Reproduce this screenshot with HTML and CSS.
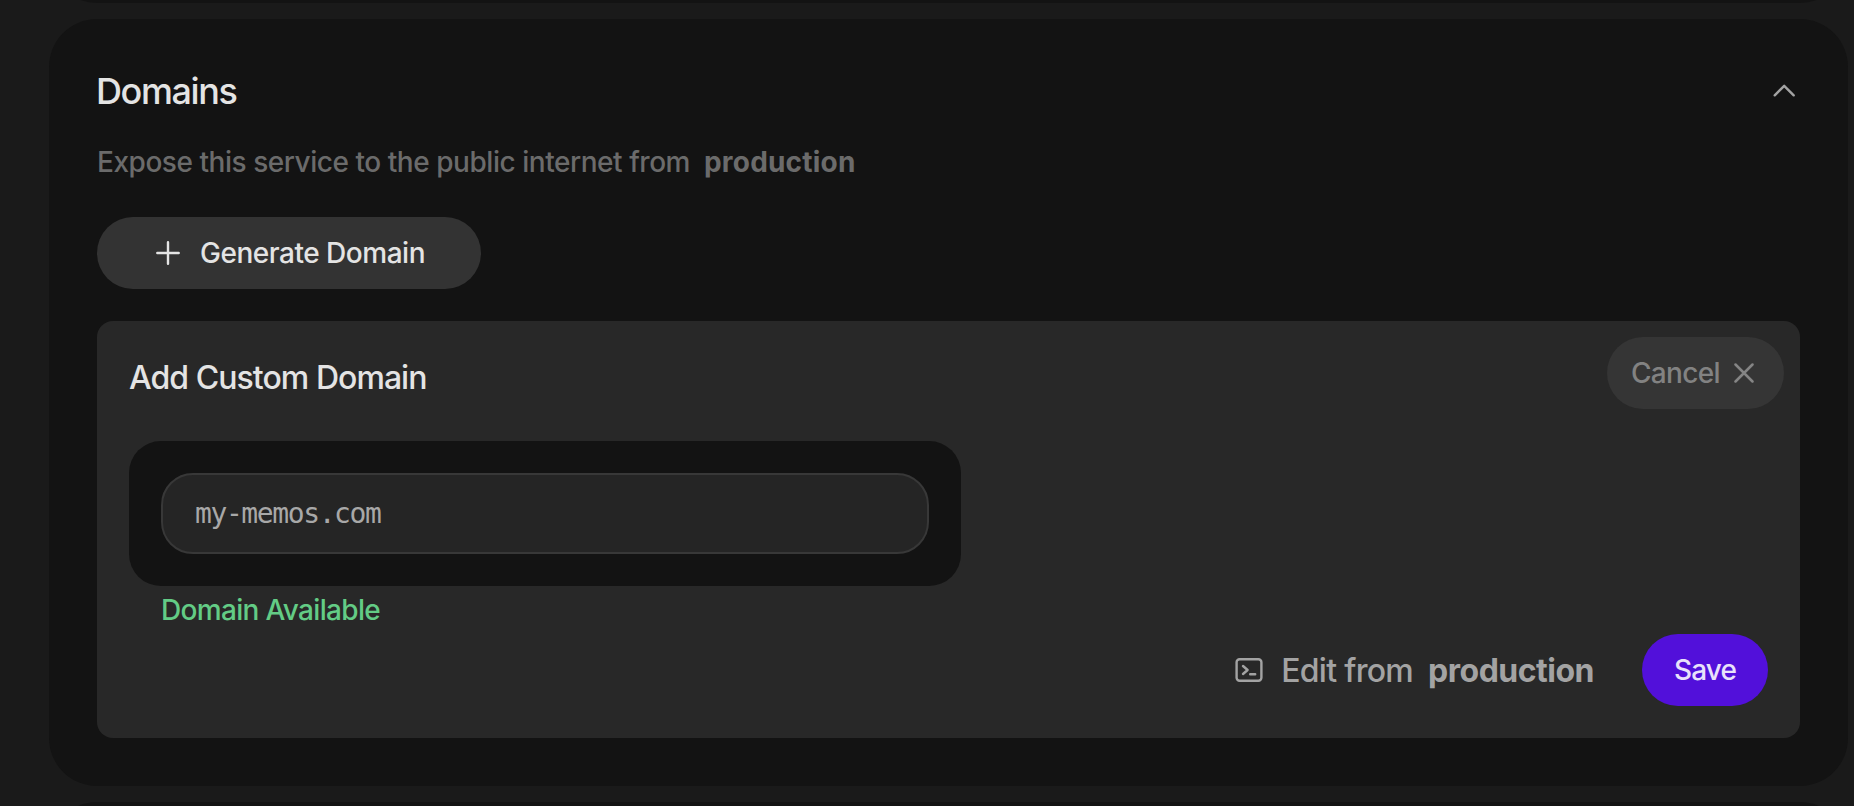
FILE: index.html
```html
<!DOCTYPE html>
<html lang="en">
<head>
<meta charset="utf-8">
<title>Domains</title>
<link rel="stylesheet" href="styles.css">
</head>
<body>
<main class="page">
  <section class="card card-prev"></section>
  <section class="card domains">
    <header class="card-head">
      <h2 class="card-title">Domains</h2>
      <svg class="chevron" width="24" height="14" viewBox="0 0 24 14"><path d="M2.7 11.3 L12.2 1.8 L21.7 11.3"/></svg>
    </header>
    <p class="lead"><span>Expose this service to the public internet from</span><b class="env">production</b></p>
    <button class="btn generate" type="button">
      <svg class="plus" width="24" height="24" viewBox="0 0 24 24"><path d="M12 1.3V22.7M1.3 12H22.7"/></svg>
      <span>Generate Domain</span>
    </button>
    <form class="panel">
      <div class="panel-head">
        <h3 class="panel-title">Add Custom Domain</h3>
        <button class="btn cancel" type="button">
          <span>Cancel</span>
          <svg class="cross" width="20" height="20" viewBox="0 0 20 20"><path d="M1.5 1.5L18.5 18.5M18.5 1.5L1.5 18.5"/></svg>
        </button>
      </div>
      <div class="field">
        <input class="input" type="text" value="my-memos.com" spellcheck="false" aria-label="Domain">
      </div>
      <p class="status">Domain Available</p>
      <footer class="panel-foot">
        <svg class="terminal" width="28" height="24" viewBox="0 0 28 24">
          <rect x="1.6" y="1.25" width="24.8" height="21.5" rx="3"/>
          <path d="M8 8L12.6 12L8 16M15.2 16.2H20.2"/>
        </svg>
        <span class="edit">Edit from</span>
        <b class="edit-env">production</b>
        <button class="btn save" type="button">Save</button>
      </footer>
    </form>
  </section>
  <section class="card card-next"></section>
</main>
</body>
</html>
```

FILE: styles.css
```css
* { box-sizing: border-box; }
body {
  margin: 0;
  background: #1a1a1a;
  color: #e4e4e4;
  font-family: Inter, "Liberation Sans", sans-serif;
  font-weight: 450;
  overflow: hidden;
}
h2, h3, p { margin: 0; font-weight: 450; }
svg { flex: none; fill: none; stroke-linecap: round; stroke-linejoin: round; }

.page {
  height: 806px;
  padding: 0 6px 0 49px;
  display: flex;
  flex-direction: column;
  gap: 16px;
  overflow: hidden;
}
.card { flex: none; background: #131313; border-radius: 48px; }
.card-prev, .card-next { height: 120px; }
.card-prev { margin-top: -117px; }

.domains { height: 767px; padding: 48px; }
.card-head {
  display: flex;
  justify-content: space-between;
  align-items: center;
  height: 48px;
  padding-right: 4px;
}
.card-title { font-size: 36px; line-height: 48px; letter-spacing: -1.4px; margin-left: -1px; }
.chevron { stroke: #a3a3a3; stroke-width: 2.4; }

.lead {
  display: flex;
  margin: 27px 0 35px 0;
  color: #6b6b6b;
  font-size: 28px;
  line-height: 40px;
  letter-spacing: -0.46px;
}
.env { margin-left: 14px; letter-spacing: 0.2px; }

.btn {
  display: flex;
  align-items: center;
  height: 72px;
  border: 0;
  border-radius: 36px;
  font: 450 28px/40px Inter, "Liberation Sans", sans-serif;
}
.generate {
  width: 384px;
  padding: 0 0 0 59px;
  gap: 20px;
  background: #333;
  color: #e4e4e4;
  letter-spacing: -0.48px;
}
.plus { stroke: #e4e4e4; stroke-width: 2.4; }

.panel {
  width: 1703px;
  height: 417px;
  margin-top: 32px;
  padding: 0 32px 32px;
  border-radius: 16px;
  background: #282828;
}
.panel-head {
  display: flex;
  justify-content: space-between;
  height: 120px;
  margin-right: -16px;
}
.panel-title { margin-top: 37px; font-size: 32px; line-height: 40px; letter-spacing: -0.95px; }
.cancel {
  width: 177px;
  margin-top: 16px;
  padding: 0 0 0 24px;
  gap: 14px;
  background: #353535;
  color: #828282;
  letter-spacing: -0.7px;
}
.cross { stroke: #858585; stroke-width: 2.5; }

.field { width: 832px; height: 145px; padding: 32px; border-radius: 32px; background: #131313; }
.input {
  display: block;
  width: 100%;
  height: 81px;
  padding: 0 32px;
  border: 2px solid #383838;
  border-radius: 32px;
  outline: 0;
  background: #252525;
  color: #a8a8a8;
  font: 28px "DejaVu Sans Mono", monospace;
  letter-spacing: -1.4px;
}
.status {
  margin: 4px 0 4px 32px;
  color: #63cc85;
  font-size: 28px;
  line-height: 40px;
  letter-spacing: -0.67px;
}

.panel-foot { display: flex; align-items: center; justify-content: flex-end; color: #a3a3a3; font-size: 32px; line-height: 40px; }
.terminal { stroke: #a3a3a3; stroke-width: 2.4; }
.edit, .edit-env { padding-top: 2px; }
.edit { margin-left: 18px; letter-spacing: -0.7px; }
.edit-env { margin-left: 15px; letter-spacing: -0.5px; }
.save {
  justify-content: center;
  width: 126px;
  margin-left: 48px;
  padding: 0;
  background: #5210da;
  color: #e8e2fb;
  letter-spacing: -0.85px;
}
```
